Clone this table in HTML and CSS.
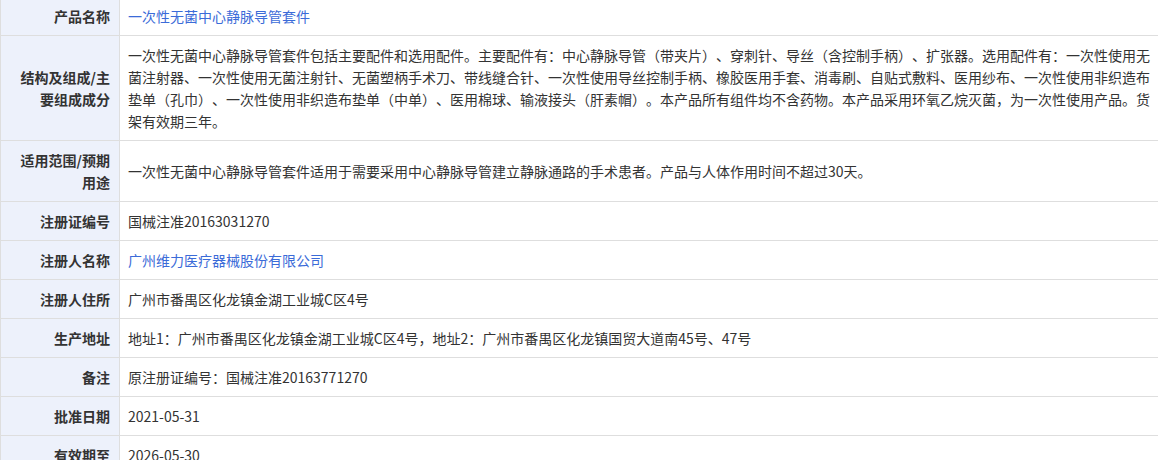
FILE: index.html
```html
<!DOCTYPE html>
<html lang="zh-CN">
<head>
    <meta charset="UTF-8">
    <meta name="viewport" content="width=device-width, initial-scale=1.0">
    <title>产品详情</title>
    <link rel="stylesheet" href="styles.css">
</head>
<body>
    <table class="detail">
        <colgroup>
            <col class="label-col">
            <col>
        </colgroup>
        <tbody>
            <tr>
                <th>产品名称</th>
                <td><a href="#">一次性无菌中心静脉导管套件</a></td>
            </tr>
            <tr>
                <th>结构及组成/主要组成成分</th>
                <td>一次性无菌中心静脉导管套件包括主要配件和选用配件。主要配件有：中心静脉导管（带夹片）、穿刺针、导丝（含控制手柄）、扩张器。选用配件有：一次性使用无<br>菌注射器、一次性使用无菌注射针、无菌塑柄手术刀、带线缝合针、一次性使用导丝控制手柄、橡胶医用手套、消毒刷、自贴式敷料、医用纱布、一次性使用非织造布垫单（孔巾）、一次性使用非织造布垫单（中单）、医用棉球、输液接头（肝素帽）。本产品所有组件均不含药物。本产品采用环氧乙烷灭菌，为一次性使用产品。货架有效期三年。</td>
            </tr>
            <tr>
                <th>适用范围/预期用途</th>
                <td>一次性无菌中心静脉导管套件适用于需要采用中心静脉导管建立静脉通路的手术患者。产品与人体作用时间不超过30天。</td>
            </tr>
            <tr>
                <th>注册证编号</th>
                <td>国械注准20163031270</td>
            </tr>
            <tr>
                <th>注册人名称</th>
                <td><a href="#">广州维力医疗器械股份有限公司</a></td>
            </tr>
            <tr>
                <th>注册人住所</th>
                <td>广州市番禺区化龙镇金湖工业城C区4号</td>
            </tr>
            <tr>
                <th>生产地址</th>
                <td>地址1：广州市番禺区化龙镇金湖工业城C区4号，地址2：广州市番禺区化龙镇国贸大道南45号、47号</td>
            </tr>
            <tr>
                <th>备注</th>
                <td>原注册证编号：国械注准20163771270</td>
            </tr>
            <tr>
                <th>批准日期</th>
                <td>2021-05-31</td>
            </tr>
            <tr>
                <th>有效期至</th>
                <td>2026-05-30</td>
            </tr>
        </tbody>
    </table>
</body>
</html>
```

FILE: styles.css
```css
* {
    margin: 0;
    padding: 0;
    box-sizing: border-box;
}

body {
    font-family: "Noto Sans CJK SC", "Noto Sans", sans-serif;
    font-size: 14px;
    color: #333;
    background: #fff;
    overflow: hidden;
}

.detail {
    width: 1160px;
    margin-top: -4px;
    border-collapse: collapse;
    table-layout: fixed;
    text-spacing-trim: space-all;
}

.label-col {
    width: 119px;
}

.detail th,
.detail td {
    border: 1px solid #dedede;
    padding: 8px 8px;
    line-height: 22px;
    vertical-align: middle;
}

.detail th {
    background: #edf1fb;
    text-align: right;
    font-weight: bold;
    padding-right: 9px;
}

.detail td {
    text-align: left;
    font-weight: normal;
    padding-right: 4px;
}

.detail a {
    color: #3b6bd8;
    text-decoration: none;
}
```
